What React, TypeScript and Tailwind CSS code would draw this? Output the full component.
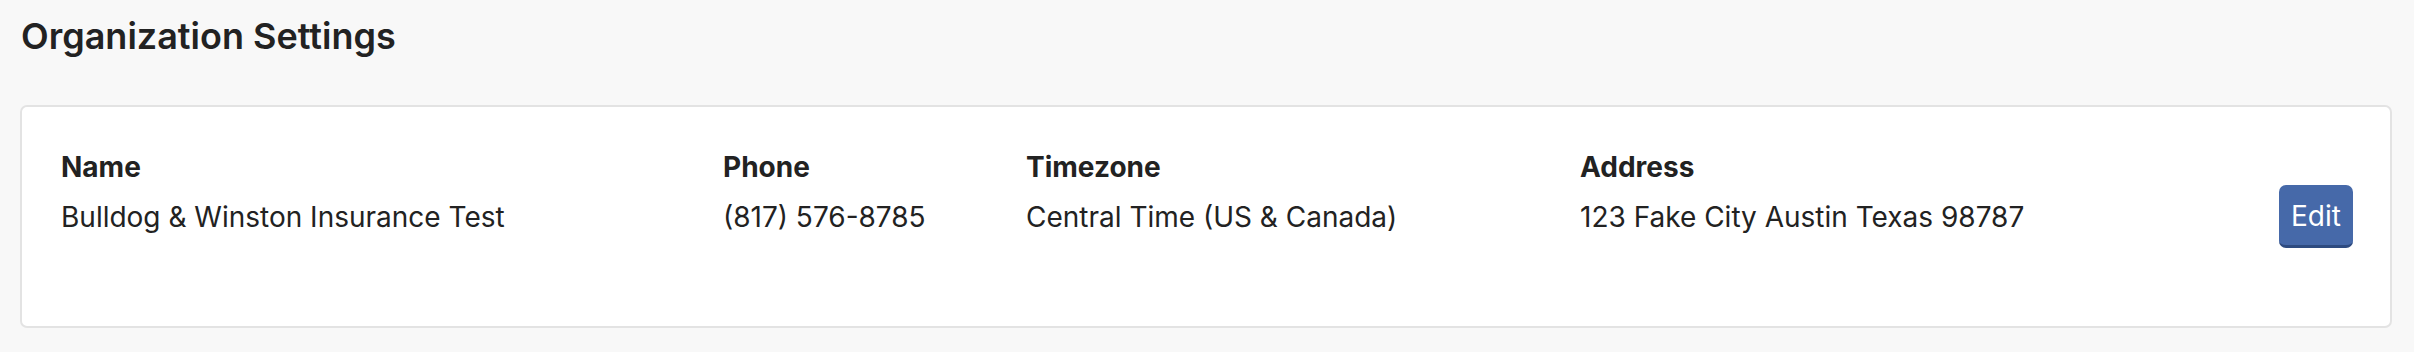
import React from 'react';

const fields = [
  { label: 'Name', value: 'Bulldog & Winston Insurance Test', width: 'w-[662px]' },
  { label: 'Phone', value: '(817) 576-8785', width: 'w-[303px]' },
  { label: 'Timezone', value: 'Central Time (US & Canada)', width: 'w-[554px]' },
  { label: 'Address', value: '123 Fake City Austin Texas 98787', width: 'flex-1' },
];

const App: React.FC = () => {
  return (
    <div
      className="min-h-[352px] w-full bg-[#f8f8f8] text-[#222222]"
      style={{ fontFamily: 'Inter, "Noto Sans", sans-serif' }}
    >
      <div className="pl-[20px] pr-[22px] pt-[14px]">
        {/* Page title */}
        <h1 className="text-[36px] leading-[44px] font-semibold pl-px">
          Organization Settings
        </h1>

        {/* Settings card */}
        <div className="mt-[47px] h-[223px] bg-white border-2 border-[#e3e3e3] rounded-[7px] pl-[39px] pr-[37px] pt-[43px]">
          <div className="flex items-start">
            {fields.map((f) => (
              <div key={f.label} className={f.width}>
                <div className="text-[28px] leading-[34px] font-bold">{f.label}</div>
                <div className="mt-[16px] text-[28px] leading-[34px]">{f.value}</div>
              </div>
            ))}
            <button className="mt-[35px] h-[63px] w-[74px] rounded-[7px] bg-[#4669a9] border-b-[3px] border-[#2e4b80] text-white text-[28px] leading-[34px] pt-[2px]">
              Edit
            </button>
          </div>
        </div>
      </div>
    </div>
  );
};

export default App;
